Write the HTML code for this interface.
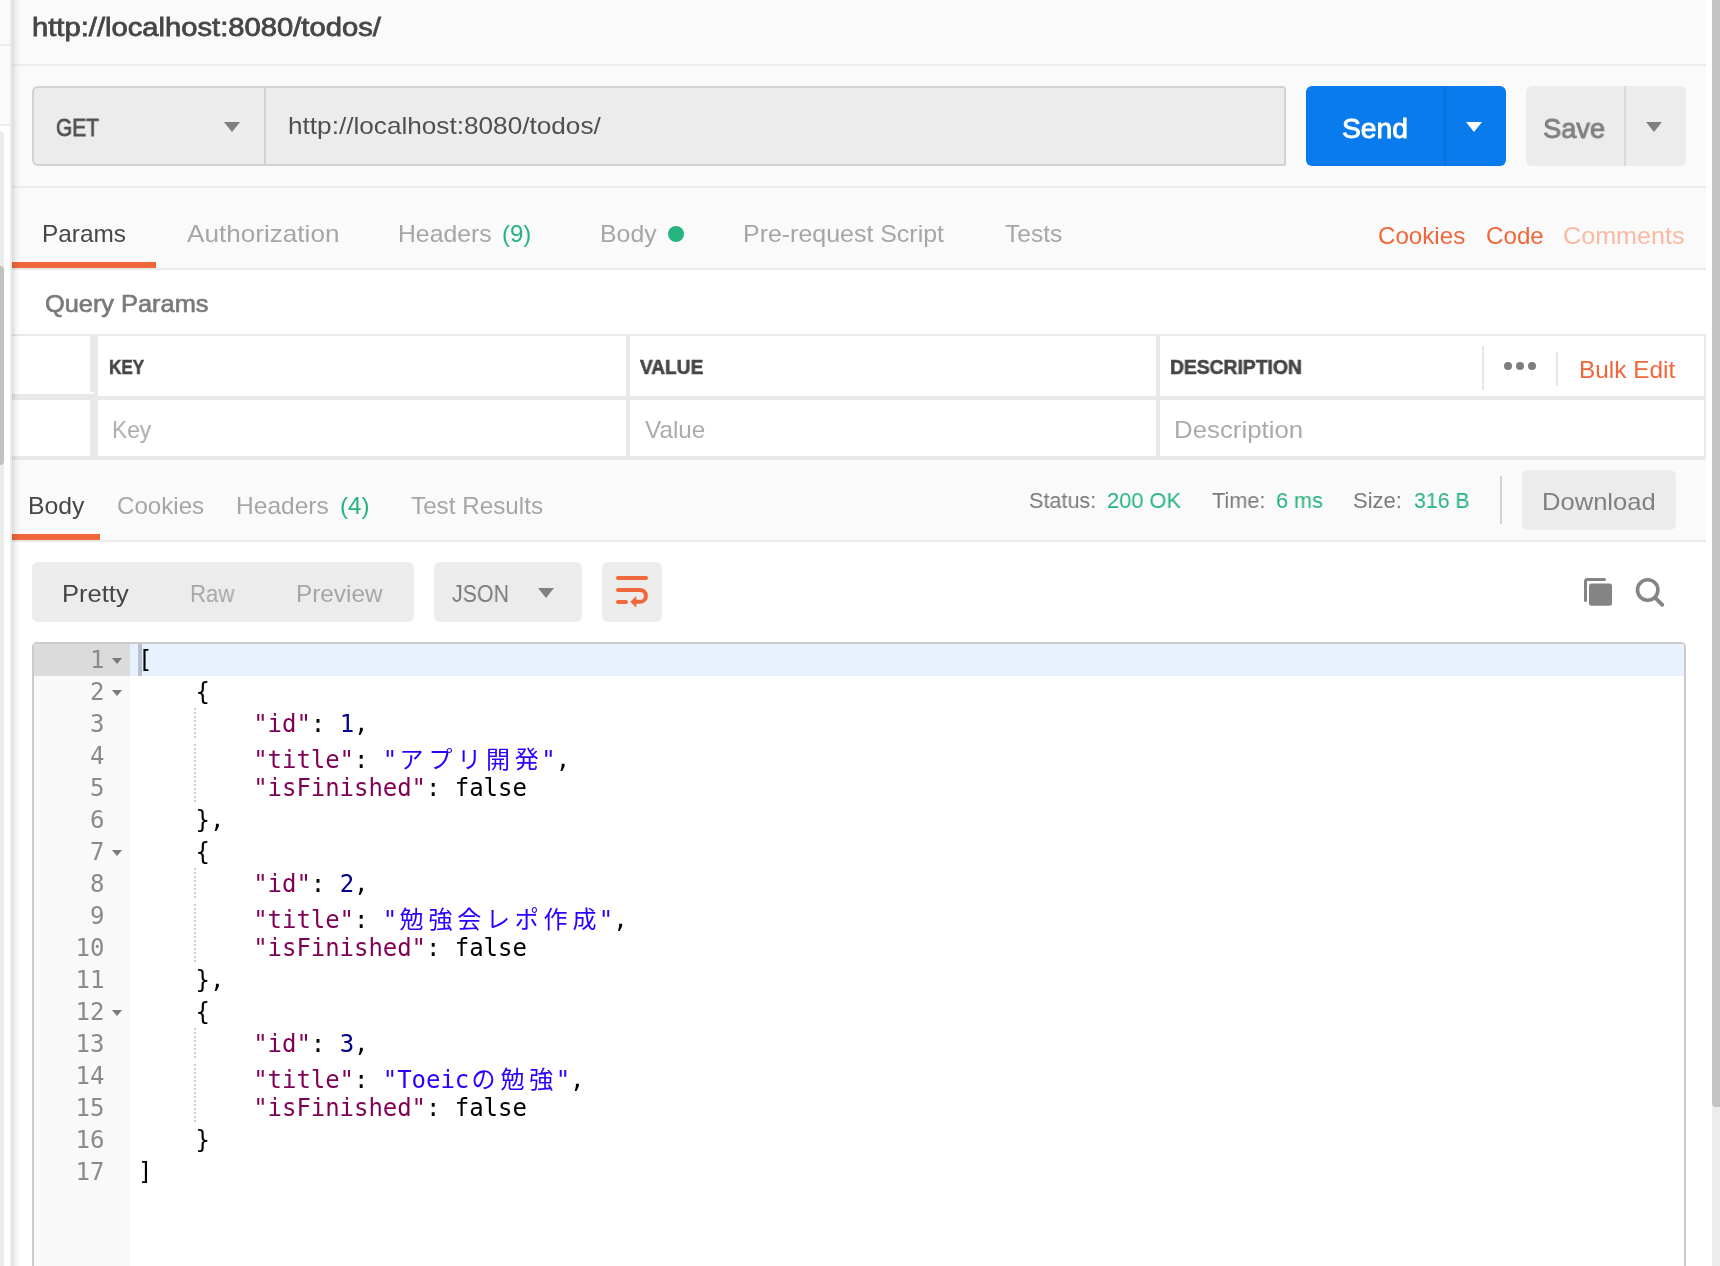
<!DOCTYPE html>
<html lang="ja">
<head>
<meta charset="utf-8">
<title>Postman</title>
<style>
html,body{margin:0;padding:0;}
body{width:1720px;height:1266px;overflow:hidden;background:#fff;position:relative;
  font-family:"Liberation Sans","Noto Sans CJK JP",sans-serif;color:#505050;}
.abs{position:absolute;}
.t{position:absolute;white-space:nowrap;line-height:1;transform-origin:0 0;will-change:transform;
  font-family:"Liberation Sans","Noto Sans CJK JP",sans-serif;}
.hl{position:absolute;height:2px;background:#e9e9e9;}
.vl{position:absolute;width:2px;background:#e0e0e0;}
.tri{position:absolute;width:0;height:0;border-left:8px solid transparent;border-right:8px solid transparent;border-top:10px solid #808080;}
.box{position:absolute;background:#ececec;border-radius:6px;}
svg{position:absolute;overflow:visible;}

/* code editor */
#ed{position:absolute;left:32px;top:642px;width:1650px;height:640px;border:2px solid #cbcbcb;border-radius:5px;background:#fff;overflow:hidden;}
#gut{position:absolute;left:0;top:0;width:96px;height:640px;background:#f9f9f9;}
#actg{position:absolute;left:0;top:0;width:96px;height:32px;background:#dbdbdb;}
#actl{position:absolute;left:96px;top:0;width:1554px;height:32px;background:#e8f2fe;}
#cur{position:absolute;left:104px;top:0;width:4px;height:32px;background:#b9c2d0;}
.ln,.cl{position:absolute;will-change:transform;height:32px;line-height:32px;font-size:24px;white-space:pre;
  font-family:"DejaVu Sans Mono","Liberation Mono","Noto Sans CJK JP",monospace;}
.ln{left:0;width:70.5px;text-align:right;color:#8a8a8a;}
.cl{left:104px;color:#000;letter-spacing:-0.05px;}
.k{color:#7f0055;}
.n{color:#00008b;}
.s{color:#2a00ff;}
.j{font-family:"Noto Sans CJK JP","Liberation Mono",monospace;letter-spacing:4.8px;margin-left:2.4px;margin-right:-2.4px;}
.fold{position:absolute;left:78px;width:0;height:0;border-left:5px solid transparent;border-right:5px solid transparent;border-top:6px solid #7a7a7a;}
.guide{position:absolute;left:160px;width:2px;background:repeating-linear-gradient(to bottom,#cdcdcd 0,#cdcdcd 2px,transparent 2px,transparent 4px);}
</style>
</head>
<body>
<aside class="left-sidebar-sliver">
<div class="abs" style="left:0;top:0;width:10px;height:124px;background:#fafafa"></div>
<div class="hl" style="left:0;top:44px;width:10px;background:#ececec"></div>
<div class="hl" style="left:0;top:124px;width:10px;background:#ececec"></div>
<div class="abs" style="left:0;top:131px;width:4px;height:1140px;background:#ececec;border-radius:0 4px 0 0"></div>
<div class="abs" style="left:0;top:266px;width:4px;height:199px;background:#c1c1c1;border-radius:0 4px 4px 0"></div>
<div class="abs" style="left:10px;top:0;width:2px;height:1266px;background:#ececec"></div>
</aside>
<div class="main-backgrounds">
<div class="abs" style="left:12px;top:0;width:1694px;height:268px;background:#fafafa"></div>
<div class="abs" style="left:12px;top:460px;width:1694px;height:80px;background:#fafafa"></div>
</div>
<div class="horizontal-separators">
<div class="hl" style="left:12px;top:64px;width:1694px;height:2px;background:#ececec"></div>
<div class="hl" style="left:12px;top:186px;width:1694px;background:#ececec"></div>
<div class="hl" style="left:12px;top:268px;width:1694px;background:#e9e9e9"></div>
<div class="hl" style="left:12px;top:540px;width:1694px;background:#e9e9e9"></div>
</div>
<header class="tab-title">
<span class="t" style="left:32.32px;top:14.10px;font-size:26px;-webkit-text-stroke:0.78px #464646;color:#464646;transform:scaleX(1.1226)">http://localhost:8080/todos/</span>
</header>
<section class="request-bar">
<div class="abs" style="left:32px;top:86px;width:1250px;height:76px;border:2px solid #d2d2d2;border-radius:6px 3px 1px 6px;background:#ececec"></div>
<div class="abs" style="left:264px;top:88px;width:2px;height:76px;background:#d2d2d2"></div>
<div class="tri" style="left:224px;top:122px;"></div>
<div class="abs" style="left:1306px;top:86px;width:200px;height:80px;border-radius:6px;background:#097bed"></div>
<div class="abs" style="left:1444px;top:86px;width:2px;height:80px;background:#0a70d6"></div>
<div class="tri" style="left:1466px;top:122px;border-top-color:#fff"></div>
<div class="box" style="left:1526px;top:86px;width:160px;height:80px;"></div>
<div class="abs" style="left:1624px;top:86px;width:2px;height:80px;background:#d9d9d9"></div>
<div class="tri" style="left:1646px;top:122px;"></div>
<span class="t" style="left:56.49px;top:115.60px;font-size:24px;-webkit-text-stroke:0.82px #505050;color:#505050;transform:scaleX(0.8688)">GET</span>
<span class="t" style="left:287.91px;top:113.60px;font-size:24px;color:#505050;transform:scaleX(1.0902)">http://localhost:8080/todos/</span>
<span class="t" style="left:1341.94px;top:114.60px;font-size:28px;-webkit-text-stroke:0.90px #ffffff;color:#ffffff;transform:scaleX(1.0092)">Send</span>
<span class="t" style="left:1543.46px;top:114.60px;font-size:28px;-webkit-text-stroke:0.90px #808080;color:#808080;transform:scaleX(0.9724)">Save</span>
</section>
<nav class="request-tabs">
<div class="abs" style="left:12px;top:262px;width:144px;height:6px;background:#f0673a"></div>
<div class="abs" style="left:668px;top:226px;width:16px;height:16px;border-radius:50%;background:#26b47f"></div>
<span class="t" style="left:41.98px;top:221.60px;font-size:24px;color:#464646;transform:scaleX(1.0161)">Params</span>
<span class="t" style="left:187.00px;top:221.60px;font-size:24px;color:#a6a6a6;transform:scaleX(1.0884)">Authorization</span>
<span class="t" style="left:398.27px;top:221.60px;font-size:24px;color:#a6a6a6;transform:scaleX(1.0310)">Headers</span>
<span class="t" style="left:501.60px;top:221.60px;font-size:24px;color:#26b47f;transform:scaleX(0.9985)">(9)</span>
<span class="t" style="left:600.36px;top:221.60px;font-size:24px;color:#a6a6a6;transform:scaleX(1.0353)">Body</span>
<span class="t" style="left:742.96px;top:221.60px;font-size:24px;color:#a6a6a6;transform:scaleX(1.0392)">Pre-request Script</span>
<span class="t" style="left:1005.00px;top:221.60px;font-size:24px;color:#a6a6a6;transform:scaleX(1.0229)">Tests</span>
<span class="t" style="left:1377.79px;top:223.60px;font-size:24px;color:#f0673a;transform:scaleX(1.0058)">Cookies</span>
<span class="t" style="left:1485.59px;top:223.60px;font-size:24px;color:#f0673a;transform:scaleX(1.0067)">Code</span>
<span class="t" style="left:1563.45px;top:223.60px;font-size:24px;color:#f9b9a2;transform:scaleX(1.0476)">Comments</span>
</nav>
<section class="params-table">
<div class="hl" style="left:12px;top:334px;width:1694px;background:#e9e9e9"></div>
<div class="abs" style="left:12px;top:396px;width:1694px;height:4px;background:#e9e9e9"></div>
<div class="abs" style="left:12px;top:394px;width:78px;height:2px;background:#e9e9e9"></div>
<div class="abs" style="left:12px;top:456px;width:1694px;height:4px;background:#e9e9e9"></div>
<div class="abs" style="left:90px;top:336px;width:8px;height:120px;background:#e9e9e9"></div>
<div class="abs" style="left:90px;top:392px;width:4px;height:2px;background:#fff"></div>
<div class="abs" style="left:626px;top:336px;width:4px;height:120px;background:#e9e9e9"></div>
<div class="abs" style="left:1156px;top:336px;width:4px;height:120px;background:#e9e9e9"></div>
<div class="abs" style="left:1704px;top:336px;width:2px;height:120px;background:#e9e9e9"></div>
<div class="vl" style="left:1482px;top:346px;height:44px;background:#e6e6e6"></div>
<div class="vl" style="left:1556px;top:352px;height:34px;background:#e6e6e6"></div>
<div class="abs" style="left:1504px;top:362px;width:8px;height:8px;border-radius:50%;background:#7e7e7e"></div>
<div class="abs" style="left:1516px;top:362px;width:8px;height:8px;border-radius:50%;background:#7e7e7e"></div>
<div class="abs" style="left:1528px;top:362px;width:8px;height:8px;border-radius:50%;background:#7e7e7e"></div>
<span class="t" style="left:44.50px;top:291.60px;font-size:24px;-webkit-text-stroke:0.67px #7a7a7a;color:#7a7a7a;transform:scaleX(1.0565)">Query Params</span>
<span class="t" style="left:108.80px;top:357.10px;font-size:20px;font-weight:bold;-webkit-text-stroke:0.60px #464646;color:#464646;transform:scaleX(0.8554)">KEY</span>
<span class="t" style="left:640.29px;top:357.10px;font-size:20px;font-weight:bold;-webkit-text-stroke:0.60px #464646;color:#464646;transform:scaleX(0.9540)">VALUE</span>
<span class="t" style="left:1170.32px;top:357.10px;font-size:20px;font-weight:bold;-webkit-text-stroke:0.60px #464646;color:#464646;transform:scaleX(0.9644)">DESCRIPTION</span>
<span class="t" style="left:1579.18px;top:357.60px;font-size:24px;color:#f0673a;transform:scaleX(1.0166)">Bulk Edit</span>
<span class="t" style="left:112.45px;top:417.60px;font-size:24px;color:#ababab;transform:scaleX(0.9491)">Key</span>
<span class="t" style="left:644.50px;top:417.60px;font-size:24px;color:#ababab;transform:scaleX(1.0126)">Value</span>
<span class="t" style="left:1174.32px;top:417.60px;font-size:24px;color:#ababab;transform:scaleX(1.0756)">Description</span>
</section>
<section class="response-header">
<div class="abs" style="left:12px;top:534px;width:88px;height:6px;background:#f0673a"></div>
<div class="vl" style="left:1500px;top:476px;height:48px;background:#d4d4d4"></div>
<div class="box" style="left:1522px;top:470px;width:154px;height:60px;"></div>
<span class="t" style="left:27.97px;top:493.60px;font-size:24px;color:#464646;transform:scaleX(1.0316)">Body</span>
<span class="t" style="left:116.90px;top:493.60px;font-size:24px;color:#a6a6a6;transform:scaleX(1.0046)">Cookies</span>
<span class="t" style="left:236.48px;top:493.60px;font-size:24px;color:#a6a6a6;transform:scaleX(1.0232)">Headers</span>
<span class="t" style="left:339.79px;top:493.60px;font-size:24px;color:#26b47f;transform:scaleX(1.0059)">(4)</span>
<span class="t" style="left:410.90px;top:493.60px;font-size:24px;color:#a6a6a6;transform:scaleX(1.0106)">Test Results</span>
<span class="t" style="left:1029.02px;top:489.60px;font-size:22px;color:#7a7a7a;transform:scaleX(0.9824)">Status:</span>
<span class="t" style="left:1106.71px;top:489.60px;font-size:22px;color:#26b47f;transform:scaleX(0.9915)">200 OK</span>
<span class="t" style="left:1212.20px;top:489.60px;font-size:22px;color:#7a7a7a;transform:scaleX(0.9874)">Time:</span>
<span class="t" style="left:1275.52px;top:489.60px;font-size:22px;color:#26b47f;transform:scaleX(0.9834)">6 ms</span>
<span class="t" style="left:1353.30px;top:489.60px;font-size:22px;color:#7a7a7a;transform:scaleX(0.9979)">Size:</span>
<span class="t" style="left:1413.60px;top:489.60px;font-size:22px;color:#26b47f;transform:scaleX(0.9680)">316 B</span>
<span class="t" style="left:1542.43px;top:489.60px;font-size:24px;color:#808080;transform:scaleX(1.0653)">Download</span>
</section>
<section class="response-toolbar">
<div class="box" style="left:32px;top:562px;width:382px;height:60px;"></div>
<div class="box" style="left:434px;top:562px;width:148px;height:60px;"></div>
<div class="tri" style="left:538px;top:588px;"></div>
<div class="box" style="left:602px;top:562px;width:60px;height:60px;"></div>
<svg style="left:602px;top:562px" width="60" height="60" viewBox="602 562 60 60" fill="none" stroke="#f0673a" stroke-width="4" stroke-linecap="round" stroke-linejoin="round">
  <path d="M618 578 H646"/>
  <path d="M618 590 H640 A5.9 5.9 0 0 1 640 601.8 H636"/>
  <path d="M618 602 H626"/>
  <path d="M630.3 601.8 L636.3 596 V607.8 Z" fill="#f0673a" stroke="none"/>
</svg>
<svg style="left:1580px;top:574px" width="90" height="36" viewBox="1580 574 90 36" fill="none">
  <path d="M1604.5 579.5 H1587.5 Q1585.5 579.5 1585.5 581.5 V600.5" stroke="#848484" stroke-width="3" stroke-linecap="round"/>
  <rect x="1589" y="583.5" width="23" height="22.3" rx="2.5" fill="#848484"/>
  <circle cx="1647.7" cy="590" r="10.2" stroke="#848484" stroke-width="3.6"/>
  <path d="M1655.3 597.8 L1662.3 604.8" stroke="#848484" stroke-width="3.8" stroke-linecap="round"/>
</svg>
<span class="t" style="left:61.74px;top:581.60px;font-size:24px;color:#464646;transform:scaleX(1.0635)">Pretty</span>
<span class="t" style="left:189.98px;top:581.60px;font-size:24px;color:#a6a6a6;transform:scaleX(0.9228)">Raw</span>
<span class="t" style="left:296.09px;top:581.60px;font-size:24px;color:#a6a6a6;transform:scaleX(1.0138)">Preview</span>
<span class="t" style="left:452.40px;top:581.60px;font-size:24px;color:#7a7a7a;transform:scaleX(0.8903)">JSON</span>
</section>
<!-- response body editor -->
<div id="ed">
<div id="gut"></div><div id="actg"></div><div id="actl"></div><div id="cur"></div>
<div class="ln" style="top:0px">1</div>
<div class="fold" style="top:14px"></div>
<div class="cl" style="top:0px">[</div>
<div class="ln" style="top:32px">2</div>
<div class="fold" style="top:46px"></div>
<div class="cl" style="top:32px">    {</div>
<div class="ln" style="top:64px">3</div>
<div class="cl" style="top:64px">        <span class="k">"id"</span>: <span class="n">1</span>,</div>
<div class="ln" style="top:96px">4</div>
<div class="cl" style="top:98px">        <span class="k">"title"</span>: <span class="s">"<span class="j">アプリ開発</span>"</span>,</div>
<div class="ln" style="top:128px">5</div>
<div class="cl" style="top:128px">        <span class="k">"isFinished"</span>: false</div>
<div class="ln" style="top:160px">6</div>
<div class="cl" style="top:160px">    },</div>
<div class="ln" style="top:192px">7</div>
<div class="fold" style="top:206px"></div>
<div class="cl" style="top:192px">    {</div>
<div class="ln" style="top:224px">8</div>
<div class="cl" style="top:224px">        <span class="k">"id"</span>: <span class="n">2</span>,</div>
<div class="ln" style="top:256px">9</div>
<div class="cl" style="top:258px">        <span class="k">"title"</span>: <span class="s">"<span class="j">勉強会レポ作成</span>"</span>,</div>
<div class="ln" style="top:288px">10</div>
<div class="cl" style="top:288px">        <span class="k">"isFinished"</span>: false</div>
<div class="ln" style="top:320px">11</div>
<div class="cl" style="top:320px">    },</div>
<div class="ln" style="top:352px">12</div>
<div class="fold" style="top:366px"></div>
<div class="cl" style="top:352px">    {</div>
<div class="ln" style="top:384px">13</div>
<div class="cl" style="top:384px">        <span class="k">"id"</span>: <span class="n">3</span>,</div>
<div class="ln" style="top:416px">14</div>
<div class="cl" style="top:418px">        <span class="k">"title"</span>: <span class="s">"Toeic<span class="j">の勉強</span>"</span>,</div>
<div class="ln" style="top:448px">15</div>
<div class="cl" style="top:448px">        <span class="k">"isFinished"</span>: false</div>
<div class="ln" style="top:480px">16</div>
<div class="cl" style="top:480px">    }</div>
<div class="ln" style="top:512px">17</div>
<div class="cl" style="top:512px">]</div>
<div class="guide" style="top:64px;height:30px"></div>
<div class="guide" style="top:100px;height:58px"></div>
<div class="guide" style="top:224px;height:30px"></div>
<div class="guide" style="top:260px;height:58px"></div>
<div class="guide" style="top:384px;height:30px"></div>
<div class="guide" style="top:420px;height:58px"></div>
</div>

<!-- panel shadow + right scrollbar -->
<div class="abs" style="left:12px;top:0;width:9px;height:1266px;background:linear-gradient(to right,rgba(0,0,0,.13),rgba(0,0,0,.04) 45%,rgba(0,0,0,0))"></div>
<div class="abs" style="left:1712px;top:0;width:8px;height:1266px;background:#ececec"></div>
<div class="abs" style="left:1712px;top:0;width:8px;height:1107px;background:#c4c4c4;border-radius:0 0 0 4px"></div>
</body>
</html>
